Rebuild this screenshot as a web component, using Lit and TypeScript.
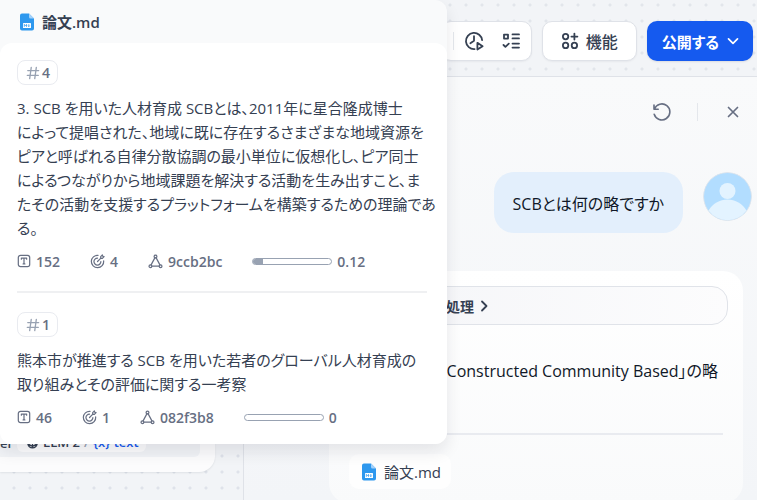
import { LitElement, html, css, svg, nothing } from "lit";
import { customElement, property } from "lit/decorators.js";

interface Chunk {
  position: number;
  lines: string[];
  words: number;
  hits: number;
  hash: string;
  score: number;
}

const CHUNKS: Chunk[] = [
  {
    position: 4,
    lines: [
      "3. SCB を用いた人材育成 SCBとは、2011年に星合隆成博士",
      "によって提唱された、地域に既に存在するさまざまな地域資源を",
      "ピアと呼ばれる自律分散協調の最小単位に仮想化し、ピア同士",
      "によるつながりから地域課題を解決する活動を生み出すこと、ま",
      "たその活動を支援するプラットフォームを構築するための理論であ",
      "る。",
    ],
    words: 152,
    hits: 4,
    hash: "9ccb2bc",
    score: 0.12,
  },
  {
    position: 1,
    lines: [
      "熊本市が推進する SCB を用いた若者のグローバル人材育成の",
      "取り組みとその評価に関する一考察",
    ],
    words: 46,
    hits: 1,
    hash: "082f3b8",
    score: 0,
  },
];

const line = (size: number, width: number, body: unknown, box = 16) => html`<svg
  width=${size}
  height=${size}
  viewBox="0 0 ${box} ${box}"
  fill="none"
  stroke="currentColor"
  stroke-width=${width}
  stroke-linecap="round"
  stroke-linejoin="round"
  aria-hidden="true"
>${body}</svg>`;

const icons = {
  file: html`<svg width="16" height="18" viewBox="0 0 16 18" aria-hidden="true">
    <path d="M3 0.5H10L15 5.5V15.5A2 2 0 0 1 13 17.5H3A2 2 0 0 1 1 15.5V2.5A2 2 0 0 1 3 0.5Z" fill="#2e98ee" />
    <path d="M10 0.5L15 5.5H11.5A1.5 1.5 0 0 1 10 4Z" fill="#a5d2fa" />
    <rect x="4" y="10" width="8" height="5" rx="0.6" fill="#fff" />
    <path d="M5.3 13.8V11.4L6.4 12.6L7.5 11.4V13.8M9.8 11.2V13.2M8.9 12.6L9.8 13.7L10.7 12.6" fill="none" stroke="#2e98ee" stroke-width="0.8" />
  </svg>`,
  hash: line(14, 1.5, svg`<path d="M6 1.5L4.2 14.5M11.8 1.5L10 14.5M2 5.2H14.5M1.5 10.8H14" />`),
  words: line(14, 1.4, svg`<rect x="1.5" y="1.5" width="13" height="13" rx="2.5" /><path d="M5 6V4.8H11V6M8 4.8V11.4M7 11.4H9" />`),
  target: line(15, 1.3, svg`<path d="M8.6 1.4A6.6 6.6 0 1 0 14.6 7.4M8 4.4A3.7 3.7 0 1 0 11.6 8" /><path d="M8 8L11.6 4.4M11.4 4.6V2.8L13.2 1L13.6 2.4L15 2.8L13.2 4.6Z" />`),
  graph: line(15, 1.3, svg`<circle cx="8" cy="2.7" r="1.5" /><circle cx="2.6" cy="13" r="1.5" /><circle cx="13.4" cy="13" r="1.5" /><path d="M7.3 4.1L3.3 11.6M8.7 4.1L12.7 11.6M4.2 13H11.8" />`),
  history: line(20, 1.8, svg`<path d="M18.1 9.2A8.1 8.1 0 1 0 10.6 18.1M10 5.2V9.8L6.4 12.2" /><path d="M13.4 11.8L18.6 15.2L13.4 18.6Z" />`, 20),
  checklist: line(18, 1.8, svg`<path d="M2 2.6H6V6.6H2ZM1.5 13L3.4 14.9L6.8 11.6M10.5 2.4H17M10.5 6.4H17M10.5 11.6H17M10.5 15.6H17" />`, 18),
  features: line(18, 1.8, svg`<circle cx="4.6" cy="4.6" r="2.7" /><circle cx="4.6" cy="13.4" r="2.7" /><circle cx="13.4" cy="13.4" r="2.7" /><path d="M13.4 1.6V7.6M10.4 4.6H16.4" />`, 18),
  down: line(12, 1.7, svg`<path d="M1.5 3.8L6 8.3L10.5 3.8" />`, 12),
  right: line(12, 1.8, svg`<path d="M4 1.5L8.5 6L4 10.5" />`, 12),
  reset: line(18, 1.6, svg`<path d="M1 2V6.2H5.2M1.4 6A8 8 0 1 1 1.2 11.2" />`, 18),
  close: line(12, 1.7, svg`<path d="M1.5 1.5L10.5 10.5M10.5 1.5L1.5 10.5" />`, 12),
  model: line(13, 1.6, svg`<path d="M8 2V13M8 13L3 10V5M8 13L13 10V5M2 9C3 13 6 14.5 8 14.5C10 14.5 13 13 14 9" />`),
};

const shared = css`
  * {
    box-sizing: border-box;
  }
  svg {
    display: block;
    flex: none;
  }
  button {
    font: inherit;
    color: inherit;
    margin: 0;
    padding: 0;
    border: 0;
    background: none;
    cursor: pointer;
  }
`;

@customElement("citation-chunk")
export class CitationChunk extends LitElement {
  @property({ attribute: false }) chunk!: Chunk;

  static styles = [
    shared,
    css`
      :host {
        display: block;
        padding: 17px 0;
        color: #676f83;
      }
      .tag {
        display: inline-flex;
        align-items: center;
        gap: 2px;
        height: 25px;
        padding: 0 7px 0 8px;
        border: 1px solid #e9ebf0;
        border-radius: 8px;
        font-size: 14px;
        font-weight: 600;
        vertical-align: top;
      }
      .tag svg {
        color: #98a2b2;
      }
      .text {
        margin: 11px 0;
        font-size: 15px;
        line-height: 24px;
        color: #354052;
        white-space: nowrap;
      }
      .meta {
        display: flex;
        align-items: center;
        gap: 30px;
        height: 20px;
        font-size: 14px;
        font-weight: 600;
      }
      .item {
        display: flex;
        align-items: center;
        gap: 5px;
      }
      .track {
        width: 80px;
        height: 7px;
        border: 1px solid #98a2b2;
        border-radius: 4px;
        overflow: hidden;
      }
      .fill {
        height: 100%;
        background: #98a2b2;
      }
    `,
  ];

  render() {
    const c = this.chunk;
    return html`
      <div class="tag">${icons.hash}<span>${c.position}</span></div>
      <p class="text">${c.lines.map((l, i) => html`${i ? html`<br />` : nothing}${l}`)}</p>
      <div class="meta">
        <span class="item">${icons.words}${c.words}</span>
        <span class="item">${icons.target}${c.hits}</span>
        <span class="item">${icons.graph}${c.hash}</span>
        <span class="item">
          <span class="track"><div class="fill" style="width:${c.score * 100}%"></div></span>
          ${c.score}
        </span>
      </div>
    `;
  }
}

@customElement("app-root")
export class AppRoot extends LitElement {
  static styles = [
    shared,
    css`
      :host {
        display: flex;
        flex-direction: column;
        position: relative;
        height: 100vh;
        overflow: hidden;
        font-family: "Open Sans", "Noto Sans CJK JP", sans-serif;
        font-feature-settings: "palt";
        font-size: 16px;
        color: #354052;
        background: #f2f4f7;
      }
      .toolbar {
        display: flex;
        justify-content: flex-end;
        align-items: center;
        gap: 10px;
        height: 76px;
        padding: 6px 4px 0 0;
        flex: none;
        background: radial-gradient(circle, #e2e5eb 1px, transparent 2px) -6px -3px / 16px 16px;
      }
      .group,
      .features,
      .publish {
        display: flex;
        align-items: center;
        justify-content: center;
        height: 40px;
        border-radius: 10px;
      }
      .group,
      .features {
        background: #fff;
        border: 1px solid #dfe2e8;
        box-shadow: 0 1px 2px #1018280d;
      }
      .group {
        gap: 18px;
        padding: 0 11px;
      }
      .bar {
        width: 1px;
        height: 18px;
        background: #e4e7ec;
      }
      .group .bar {
        margin-right: -8px;
      }
      .features {
        gap: 7px;
        padding: 0 18px;
        font-weight: 500;
      }
      .publish {
        gap: 8px;
        padding: 0 14px 0 15px;
        font-size: 15px;
        font-weight: 700;
        color: #fff;
        background: #155aef;
        box-shadow: 0 1px 2px #1018281a;
      }
      .body {
        display: flex;
        flex: 1;
        min-height: 0;
      }
      .canvas {
        display: flex;
        align-items: flex-start;
        width: 243px;
        flex: none;
        background: radial-gradient(circle, #dfe2ea 1px, transparent 2px) 6px 4px / 16px 16px;
      }
      .node {
        flex: 1;
        margin: 331px 28px 0 0;
        padding: 0 15px 15px 0;
        background: #fcfcfd;
        border-radius: 0 16px 16px 0;
        box-shadow: 0 1px 2px #10182814;
      }
      .row {
        display: flex;
        align-items: flex-end;
        gap: 4px;
        height: 50px;
        padding-bottom: 5px;
        border-radius: 0 6px 6px 0;
        background: #f2f4f7;
        font-size: 13px;
        font-weight: 600;
        line-height: 18px;
      }
      .var {
        display: flex;
        align-items: center;
        gap: 4px;
        height: 20px;
        padding: 0 7px 0 9px;
        border-radius: 6px;
        background: #fcfcfd;
      }
      .name {
        color: #155aef;
      }
      .slash {
        color: #98a2b2;
      }
      .chat {
        flex: 1;
        min-width: 0;
        border-top: 1px solid #dfe2e8;
        border-left: 1px solid #dfe2e8;
        background: linear-gradient(#f9fafb, #f3f5f8);
      }
      .tools {
        display: flex;
        justify-content: flex-end;
        align-items: center;
        gap: 26px;
        height: 70px;
        padding-right: 18px;
        color: #676f83;
      }
      .tools .close {
        margin-left: 3px;
      }
      .question {
        display: flex;
        justify-content: flex-end;
        align-items: flex-start;
        gap: 20px;
        margin: 25px 5px 38px 0;
      }
      .bubble {
        padding: 20px 19px 17px;
        border-radius: 20px;
        background: #e3effc;
        line-height: 24px;
        color: #101828;
      }
      .avatar {
        border-radius: 50%;
      }
      .answer {
        margin: 0 14px 0 85px;
        padding: 15px 15px 14px;
        border-radius: 20px;
        background: linear-gradient(#ffffff, #f9fafb);
      }
      .process {
        display: flex;
        align-items: center;
        gap: 4px;
        width: 100%;
        height: 39px;
        padding-left: 101px;
        border: 1px solid #e0e3e9;
        border-radius: 16px;
        background: linear-gradient(90deg, #f4f5f8, #fcfcfd);
        font-size: 14px;
        font-weight: 600;
      }
      .reply {
        margin: 34px 10px 50px 0;
        line-height: 24px;
        text-align: right;
        white-space: nowrap;
        color: #101828;
      }
      .rule {
        height: 2px;
        margin: 0;
        border: 0;
        background: #e9ebf0;
      }
      .answer .rule {
        margin: 0 5px 19px;
      }
      .chip {
        display: inline-flex;
        align-items: center;
        gap: 7px;
        height: 35px;
        margin-left: 5px;
        padding: 0 10px 0 12px;
        border-radius: 10px;
        background: #fefefe;
        font-size: 15px;
        color: #354052;
        text-decoration: none;
        vertical-align: top;
      }
      .popup {
        position: absolute;
        top: 0;
        left: 0;
        width: 447px;
        border-radius: 0 12px 12px 0;
        background: #f9fafb;
        box-shadow: 0 8px 16px #10182818;
      }
      .title {
        display: flex;
        align-items: center;
        gap: 7px;
        height: 43px;
        margin: 0;
        padding-left: 19px;
        font-size: 15px;
        font-weight: 600;
      }
      .sheet {
        padding: 0 20px 0 17px;
        border-radius: 12px;
        background: #fff;
      }
      .sheet .rule {
        margin: 3px 0 2px;
        background: #eff0f2;
      }
    `,
  ];

  render() {
    return html`
      <header class="toolbar">
        <div class="group">
          <span class="bar"></span>
          <button aria-label="実行履歴">${icons.history}</button>
          <button aria-label="チェックリスト">${icons.checklist}</button>
        </div>
        <button class="features">${icons.features}<span>機能</span></button>
        <button class="publish"><span>公開する</span>${icons.down}</button>
      </header>
      <main class="body">
        <section class="canvas">
          <div class="node">
            <div class="row">
              <span>er</span>
              <span class="var">
                ${icons.model}<span>LLM 2</span><span class="slash">/</span><span class="name">{x} text</span>
              </span>
            </div>
          </div>
        </section>
        <section class="chat">
          <div class="tools">
            <button aria-label="リセット">${icons.reset}</button>
            <span class="bar"></span>
            <button class="close" aria-label="閉じる">${icons.close}</button>
          </div>
          <div class="question">
            <div class="bubble">SCBとは何の略ですか</div>
            <svg class="avatar" width="49" height="49" viewBox="0 0 49 49" aria-hidden="true">
              <circle cx="24.5" cy="24.5" r="24" fill="#b2ddff" stroke="#dfe5ec" />
              <circle cx="24.5" cy="19" r="8" fill="#e3f3ff" />
              <path d="M5.5 38.5A22 22 0 0 1 43.5 38.5A23.5 23.5 0 0 1 5.5 38.5Z" fill="#e3f3ff" />
            </svg>
          </div>
          <article class="answer">
            <button class="process"><span>処理</span>${icons.right}</button>
            <p class="reply">Constructed Community Based」の略</p>
            <hr class="rule" />
            <a class="chip" href="#">${icons.file}<span>論文.md</span></a>
          </article>
        </section>
      </main>
      <aside class="popup">
        <h2 class="title">${icons.file}<span>論文.md</span></h2>
        <div class="sheet">
          ${CHUNKS.map(
            (c, i) => html`${i ? html`<hr class="rule" />` : nothing}<citation-chunk .chunk=${c}></citation-chunk>`,
          )}
        </div>
      </aside>
    `;
  }
}
